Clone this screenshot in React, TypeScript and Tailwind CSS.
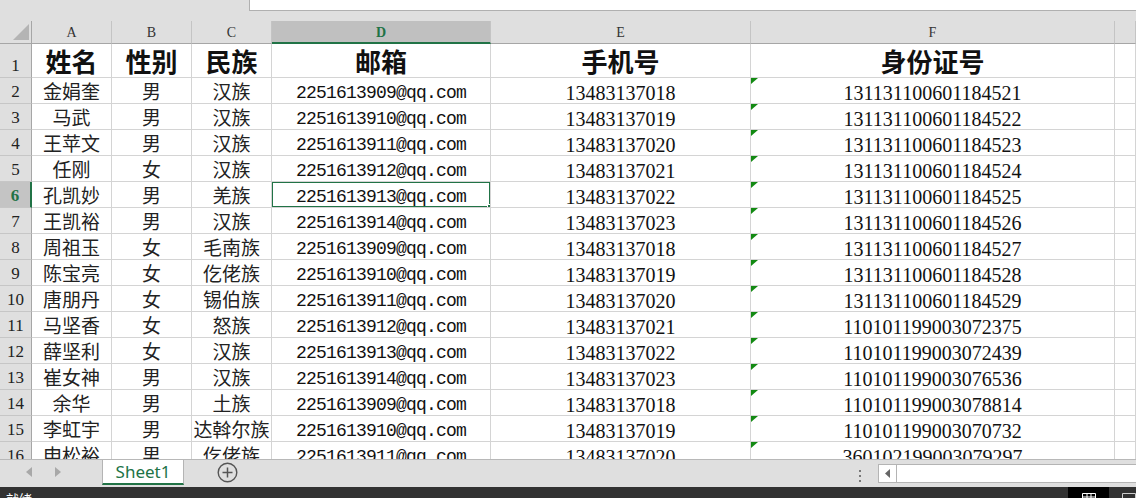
import React from 'react';

const rows: string[][] = [
  ['金娟奎', '男', '汉族', '2251613909@qq.com', '13483137018', '131131100601184521'],
  ['马武', '男', '汉族', '2251613910@qq.com', '13483137019', '131131100601184522'],
  ['王苹文', '男', '汉族', '2251613911@qq.com', '13483137020', '131131100601184523'],
  ['任刚', '女', '汉族', '2251613912@qq.com', '13483137021', '131131100601184524'],
  ['孔凯妙', '男', '羌族', '2251613913@qq.com', '13483137022', '131131100601184525'],
  ['王凯裕', '男', '汉族', '2251613914@qq.com', '13483137023', '131131100601184526'],
  ['周祖玉', '女', '毛南族', '2251613909@qq.com', '13483137018', '131131100601184527'],
  ['陈宝亮', '女', '仡佬族', '2251613910@qq.com', '13483137019', '131131100601184528'],
  ['唐朋丹', '女', '锡伯族', '2251613911@qq.com', '13483137020', '131131100601184529'],
  ['马坚香', '女', '怒族', '2251613912@qq.com', '13483137021', '110101199003072375'],
  ['薛坚利', '女', '汉族', '2251613913@qq.com', '13483137022', '110101199003072439'],
  ['崔女神', '男', '汉族', '2251613914@qq.com', '13483137023', '110101199003076536'],
  ['余华', '男', '土族', '2251613909@qq.com', '13483137018', '110101199003078814'],
  ['李虹宇', '男', '达斡尔族', '2251613910@qq.com', '13483137019', '110101199003070732'],
  ['申松裕', '男', '仡佬族', '2251613911@qq.com', '13483137020', '360102199003079297'],
];

const headers = ['姓名', '性别', '民族', '邮箱', '手机号', '身份证号'];
const letters = ['A', 'B', 'C', 'D', 'E', 'F', ''];

const serif = "font-['Liberation_Serif','Noto_Sans_CJK_SC',serif]";
const cell = 'border-r border-b border-[#d4d4d4] flex items-center justify-center overflow-hidden whitespace-nowrap';

function RowHead({ n, h }: { n: number; h: string }) {
  const sel = n === 6;
  return (
    <div
      className={`${h} flex items-end justify-center pb-[3px] border-b border-[#c6c6c6] text-[17px] leading-none ${serif} ${
        sel ? 'bg-[#c4c4c4] text-[#217346] font-bold border-r-2 border-r-[#217346]' : 'bg-[#dfdfdf] text-[#222] border-r border-r-[#a6a6a6]'
      }`}
    >
      {n}
    </div>
  );
}

function DataRow({ n, r }: { n: number; r: string[] }) {
  return (
    <>
      <RowHead n={n} h="h-[26px]" />
      {r.map((v, i) => (
        <div
          key={i}
          className={`${cell} h-[26px] relative leading-none ${
            i === 3
              ? "font-['Liberation_Mono',monospace] text-[18px] tracking-[-0.8px] text-[#111]"
              : i >= 4
                ? `${serif} text-[20px] text-[#111]`
                : `${serif} text-[19px] text-[#222]`
          }`}
        >
          {i === 5 && (
            <svg className="absolute left-0 top-0" width="7" height="6" viewBox="0 0 7 6">
              <polygon points="0,0 7,0 0,6" fill="#138a13" />
            </svg>
          )}
          <span className="pt-[4px]">{v}</span>
          {i === 3 && n === 6 && (
            <div className="absolute -left-px -top-px -right-px -bottom-px border-2 border-[#217346]">
              <div className="absolute -right-[4px] -bottom-[4px] w-[6px] h-[6px] bg-[#217346] border border-white" />
            </div>
          )}
        </div>
      ))}
      <div className={`${cell} h-[26px]`} />
    </>
  );
}

export default function App() {
  return (
    <div className="w-[1136px] h-[498px] overflow-hidden flex flex-col bg-[#dfdfdf]">
      {/* formula bar strip */}
      <div className="h-[21px] flex flex-none">
        <div className="w-[249px]" />
        <div className="flex-1 h-[11px] bg-white border-l border-b border-[#b0b0b0]" />
      </div>

      {/* sheet grid */}
      <div className="h-[438px] flex-none overflow-hidden bg-white">
        <div className="grid grid-cols-[32px_80px_80px_80px_219px_260px_364px_1fr]">
          <div className="h-[23px] bg-[#dfdfdf] border-r border-b border-[#a6a6a6] relative">
            <svg className="absolute left-[13px] top-[3px]" width="17" height="16" viewBox="0 0 17 16">
              <polygon points="0,16 16,16 16,0" fill="#b4b4b4" />
            </svg>
          </div>
          {letters.map((l, i) => (
            <div
              key={i}
              className={`h-[23px] flex items-center justify-center pt-[1px] text-[14px] ${serif} border-r border-r-[#c4c4c4] ${
                l === 'D'
                  ? 'bg-[#c0c0c0] text-[#217346] font-bold border-b-2 border-b-[#217346]'
                  : 'bg-[#dfdfdf] text-[#333] border-b border-b-[#a6a6a6]'
              }`}
            >
              {l}
            </div>
          ))}

          <RowHead n={1} h="h-[34px]" />
          {headers.map((t) => (
            <div key={t} className={`${cell} h-[34px] ${serif} text-[26px] font-bold text-[#111] leading-none`}>
              <span className="pt-[6px]">{t}</span>
            </div>
          ))}
          <div className={`${cell} h-[34px]`} />

          {rows.map((r, i) => (
            <DataRow key={i} n={i + 2} r={r} />
          ))}
        </div>
      </div>

      {/* sheet tabs */}
      <div className="h-[28px] flex-none flex items-stretch border-t border-[#b8b8b8] bg-[#dfdfdf]">
        <div className="w-[102px] flex items-center pl-[26px] gap-[23px] pb-[3px]">
          <svg width="6" height="10" viewBox="0 0 6 10">
            <polygon points="6,0 6,10 0,5" fill="#a8a8a8" />
          </svg>
          <svg width="6" height="10" viewBox="0 0 6 10">
            <polygon points="0,0 0,10 6,5" fill="#a8a8a8" />
          </svg>
        </div>
        <div className="w-[82px] mb-[2px] bg-white border-l border-r border-[#b4b4b4] border-b-2 border-b-[#217346] flex items-center justify-center font-['Noto_Sans','Noto_Sans_CJK_SC',sans-serif] text-[17px] text-[#217346]">
          Sheet1
        </div>
        <div className="w-[33px]" />
        <div className="flex items-center pb-[2px]">
          <svg width="21" height="21" viewBox="0 0 21 21">
            <circle cx="10.5" cy="10.5" r="9.3" fill="none" stroke="#555" strokeWidth="1.4" />
            <path d="M10.5 5.5v10M5.5 10.5h10" stroke="#555" strokeWidth="1.5" />
          </svg>
        </div>
        <div className="flex-1" />
        <div className="w-[20px] flex flex-col items-center justify-center gap-[3px] pt-[4px]">
          <div className="w-[2px] h-[2px] bg-[#777]" />
          <div className="w-[2px] h-[2px] bg-[#777]" />
          <div className="w-[2px] h-[2px] bg-[#777]" />
        </div>
        <div className="w-[8px]" />
        <div className="w-[258px] mt-[4px] mb-[4px] bg-white border border-r-0 border-[#b4b4b4] flex">
          <div className="w-[18px] flex items-center justify-center border-r border-[#b4b4b4]">
            <svg width="5" height="9" viewBox="0 0 5 9">
              <polygon points="5,0 5,9 0,4.5" fill="#666" />
            </svg>
          </div>
        </div>
      </div>

      {/* status bar */}
      <div className="h-[24px] flex-none bg-[#323232] flex items-start">
        <div className="pl-[6px] pt-[5px] text-[13px] text-white font-['Noto_Sans_CJK_SC',sans-serif] leading-none">就绪</div>
        <div className="flex-1" />
        <div className="w-[41px] h-full bg-black flex justify-center pt-[6px]">
          <svg width="14" height="12" viewBox="0 0 14 12">
            <path d="M0.5 0.5h13v11h-13zM0.5 4h13M0.5 8h13M5 0.5v11M9 0.5v11" fill="none" stroke="#fff" strokeWidth="1" />
          </svg>
        </div>
        <div className="w-[13px]" />
        <div className="pt-[6px]">
          <svg width="14" height="12" viewBox="0 0 14 12">
            <path d="M0.5 0.5h13v11h-13z" fill="none" stroke="#ccc" strokeWidth="1" />
          </svg>
        </div>
      </div>
    </div>
  );
}
